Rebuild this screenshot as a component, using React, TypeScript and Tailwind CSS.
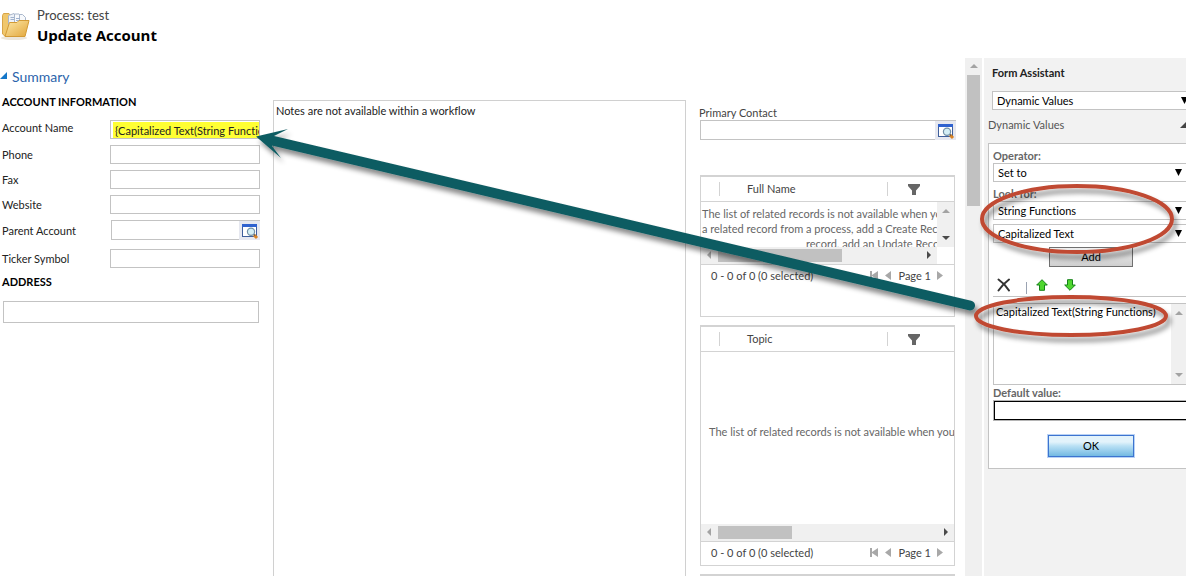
import type { ReactNode } from "react";

function FolderIcon() {
  return (
    <svg width="30" height="30" viewBox="0 0 30 30" aria-hidden="true">
      <defs>
        <linearGradient id="folder" x1="0" y1="0" x2="1" y2="1">
          <stop offset="0" stopColor="#fde9a9" />
          <stop offset="1" stopColor="#e2a63a" />
        </linearGradient>
      </defs>
      <ellipse cx="14" cy="27" rx="13" ry="2" fill="#ece6da" />
      <path d="M2.5 4.5 L3.5 2.5 H9 L10.5 4.5 V24 L5 25 L2.5 23 Z" fill="#f0c76c" stroke="#d8a548" />
      <path d="M8.500 4.500 L14 2.500 L16 5 V16 H8.500 Z" fill="#eef2f8" stroke="#a9b7cc" />
      <path d="M14.500 3 H19 L22 6 V16 H14.500 Z" fill="#f7f9fc" stroke="#a9b7cc" />
      <path d="M19.500 3.500 H22.500 L25.500 6.500 V14 H19.500 Z" fill="#f7f9fc" stroke="#a9b7cc" />
      <path d="M10.500 6.500 H14 M10.500 8.500 H14 M16 7.500 H20 M16 9.500 H20" stroke="#9fb2cf" />
      <path d="M5 25.500 L9.500 11.500 H17 L19 9.500 H29 L25 25.500 Z" fill="url(#folder)" stroke="#d39b35" strokeLinejoin="round" />
    </svg>
  );
}

function LookupIcon() {
  return (
    <svg width="18" height="18" viewBox="0 0 18 18" className="shrink-0" aria-hidden="true">
      <rect x="1.500" y="2.500" width="14" height="12" fill="#fff" stroke="#3f5f9c" />
      <rect x="1" y="2" width="15" height="3" fill="#2f62cf" />
      <path d="M13 13 L16 16" stroke="#d98324" strokeWidth="3" />
      <path d="M12.500 12 L14 13.500" stroke="#6b5a48" strokeWidth="1.500" />
      <circle cx="10" cy="9.800" r="3.600" fill="#d3eef5" stroke="#7390a6" strokeWidth="1.200" />
    </svg>
  );
}

type Dir = "up" | "down" | "left" | "right";
const triangles: Record<Dir, string> = {
  up: "M0 6 L4 2 L8 6 Z",
  down: "M0 2 L4 6 L8 2 Z",
  left: "M6 0 L2 4 L6 8 Z",
  right: "M2 0 L6 4 L2 8 Z",
};

function Triangle({ dir, color = "#a3a3a3" }: { dir: Dir; color?: string }) {
  return (
    <svg width="8" height="8" viewBox="0 0 8 8" className="shrink-0" aria-hidden="true">
      <path d={triangles[dir]} fill={color} />
    </svg>
  );
}

function Field({ id, label }: { id: string; label: string }) {
  return (
    <div className="mb-1.5 flex h-[19px] items-center">
      <label htmlFor={id} className="w-[108px] shrink-0">{label}</label>
      <input id={id} className="h-full min-w-0 flex-1 border border-[#c3c3c3] bg-white px-1 outline-none" />
    </div>
  );
}

function Lookup({ id, label }: { id: string; label: string }) {
  return (
    <div className="flex h-5 min-w-0 flex-1">
      <input id={id} className="min-w-0 flex-1 border border-r-0 border-[#c3c3c3] bg-white px-1 outline-none" />
      <button type="button" aria-label={label} className="flex w-[21px] items-center justify-center border-t border-[#c3c3c3] bg-[#e6e8f0]">
        <LookupIcon />
      </button>
    </div>
  );
}

function HorizontalScroll({ thumb, track }: { thumb: string; track: string }) {
  return (
    <div className={`flex h-[17px] items-center bg-[#f0f0f0] px-1 ${track}`}>
      <Triangle dir="left" />
      <div className={`ml-[5px] h-[13px] bg-[#c1c1c1] ${thumb}`} />
      <span className="flex-1" />
      <Triangle dir="right" color="#4a4a4a" />
    </div>
  );
}

function Grid({ title, height, children }: { title: string; height: string; children: ReactNode }) {
  return (
    <section className={`flex flex-col border border-t-2 border-[#d3d3d3] text-[#444] ${height}`}>
      <table className="w-full table-fixed border-collapse">
        <thead>
          <tr className="h-6 border-b border-[#d3d3d3]">
            <th className="w-[19px]" aria-label="Select"><div className="h-3.5 border-r border-[#d3d3d3]" /></th>
            <th className="pl-[27px] text-left font-normal">{title}</th>
            <th className="w-[67px]">
              <div className="flex h-3.5 items-center border-l border-[#d3d3d3] pl-5">
                <button type="button" aria-label={`Filter ${title}`} className="pt-0.5">
                  <svg width="12" height="12" viewBox="0 0 12 12" aria-hidden="true">
                    <path d="M0 0 H12 V2 L8 6.500 V11 H4 V6.500 L0 2 Z" fill="#666" />
                  </svg>
                </button>
              </div>
            </th>
          </tr>
        </thead>
        <tbody>
          <tr>
            <td colSpan={3} className="p-0">{children}</td>
          </tr>
        </tbody>
      </table>
      <footer className="flex h-[22px] items-center border-t border-[#d3d3d3] pl-2.5 pr-2.5 whitespace-nowrap">
        <span className="flex-1">0 - 0 of 0 (0 selected)</span>
        <button type="button" aria-label="First page" className="mr-1.5">
          <svg width="9" height="9" viewBox="0 0 9 9" aria-hidden="true">
            <path d="M0 0 H2 V4 L8 0 V9 L2 5 V9 H0 Z" fill="#a8a8a8" />
          </svg>
        </button>
        <button type="button" aria-label="Previous page" className="mr-1.5">
          <svg width="7" height="9" viewBox="0 0 7 9" aria-hidden="true"><path d="M6 0 V9 L0 4.500 Z" fill="#a8a8a8" /></svg>
        </button>
        <span>Page 1</span>
        <button type="button" aria-label="Next page" className="ml-1.5">
          <svg width="7" height="9" viewBox="0 0 7 9" aria-hidden="true"><path d="M0 0 V9 L6 4.500 Z" fill="#a8a8a8" /></svg>
        </button>
      </footer>
    </section>
  );
}

function Select({ label, value, arrow }: { label: string; value: string; arrow: string }) {
  return (
    <div className="relative h-[19px] overflow-hidden border border-r-0 border-[#c3c3c3] bg-white">
      <select aria-label={label} className="block h-full w-full appearance-none bg-transparent px-1 text-black outline-none">
        <option>{value}</option>
      </select>
      <svg width="7" height="7" viewBox="0 0 7 7" className={`pointer-events-none absolute top-[5px] ${arrow}`} aria-hidden="true">
        <path d="M0 0 H7 L3.500 7 Z" fill="#000" />
      </svg>
    </div>
  );
}

function MoveArrow({ down = false }: { down?: boolean }) {
  return (
    <svg width="12" height="12" viewBox="0 0 12 12" className={down ? "rotate-180" : ""} aria-hidden="true">
      <path d="M6 0.700 L11.300 6 H8.500 V11.300 H3.500 V6 H0.700 Z" fill="#4fd62f" stroke="#16821a" />
    </svg>
  );
}

function Annotations() {
  return (
    <svg width="1186" height="576" viewBox="0 0 1186 576" className="pointer-events-none absolute left-0 top-0" aria-hidden="true">
      <defs>
        <filter id="shade" x="-10%" y="-20%" width="120%" height="150%">
          <feDropShadow dx="3" dy="5" stdDeviation="2.500" floodColor="#000" floodOpacity="0.45" />
        </filter>
      </defs>
      <g filter="url(#shade)">
        <path d="M274 141 L970 305.500" stroke="#115c62" strokeWidth="10" strokeLinecap="round" />
        <path d="M256 136.500 L288 129 L274 136 L272 146 L281 158 Z" fill="#115c62" />
      </g>
      <g filter="url(#shade)" fill="none" stroke="#c04a33" strokeWidth="4">
        <ellipse cx="1077" cy="219" rx="95" ry="33" />
        <ellipse cx="1071" cy="316" rx="95" ry="19" />
      </g>
    </svg>
  );
}

export default function App() {
  return (
    <div className="relative flex h-screen flex-col overflow-hidden bg-white font-['Lato','Liberation_Sans',sans-serif] text-[11px] leading-[15px] text-[#222] [font-variant-ligatures:none]">
      <header className="flex h-[58px] shrink-0 items-start pt-[7px]">
        <div className="w-[37px] shrink-0 pt-1"><FolderIcon /></div>
        <div>
          <p className="text-[13px] leading-4 text-[#444]">Process: test</p>
          <h1 className="font-['Open_Sans','Liberation_Sans',sans-serif] text-[15px] leading-6 font-bold text-black">Update Account</h1>
        </div>
      </header>

      <div className="flex min-h-0 flex-1">
        <main className="flex min-w-0 flex-1 flex-col pr-[9px]">
          <h2 className="flex h-9 shrink-0 items-center gap-[5px] pt-0.5 text-sm text-[#2b64ab]">
            <svg width="7" height="7" viewBox="0 0 7 7" className="mb-1" aria-hidden="true"><path d="M7 0 V7 H0 Z" fill="#1477c9" /></svg>
            Summary
          </h2>
          <div className="flex min-h-0 flex-1 items-stretch">
            <form className="w-[260px] shrink-0 pl-0.5">
              <h3 className="mb-[11px] font-bold text-black">ACCOUNT INFORMATION</h3>
              <div className="mb-1.5 flex h-[19px] items-start">
                <label htmlFor="name" className="w-[108px] shrink-0">Account Name</label>
                <div className="h-full min-w-0 flex-1 border border-[#c3c3c3] pl-0.5 pt-px">
                  <input id="name" defaultValue="{Capitalized Text(String Functions)}" className="block h-4 w-full bg-[#ffff33] pl-0.5 outline-none" />
                </div>
              </div>
              <Field id="phone" label="Phone" />
              <Field id="fax" label="Fax" />
              <Field id="website" label="Website" />
              <div className="mb-[9px] flex items-center">
                <label htmlFor="parent" className="w-[109px] shrink-0">Parent Account</label>
                <Lookup id="parent" label="Look up parent account" />
              </div>
              <Field id="ticker" label="Ticker Symbol" />
              <h3 className="mb-3 font-bold text-black">ADDRESS</h3>
              <input aria-label="Address" className="ml-px block h-[22px] w-64 border border-[#c3c3c3] px-1 outline-none" />
            </form>

            <section className="ml-[13px] mt-1.5 min-w-0 flex-1 border border-b-0 border-[#d0d0d0] px-0.5 pt-0.5">
              Notes are not available within a workflow
            </section>

            <aside className="ml-3.5 flex w-64 shrink-0 flex-col pt-[11px]">
              <label htmlFor="contact" className="-ml-px text-[#444]">Primary Contact</label>
              <div className="mb-[35px] flex shrink-0">
                <Lookup id="contact" label="Look up primary contact" />
              </div>
              <div className="mr-px flex flex-col gap-2">
                <Grid title="Full Name" height="h-[142px]">
                  <div className="flex h-[45px] overflow-hidden">
                    <div className="min-w-0 flex-1 overflow-hidden pl-px pt-1 whitespace-nowrap text-[#666]">
                      <p>The list of related records is not available when you create</p>
                      <p>a related record from a process, add a Create Record step</p>
                      <p className="pl-[104px]">record, add an Update Record step</p>
                    </div>
                    <div className="flex w-[17px] flex-col items-center justify-between bg-[#f0f0f0] py-[5px]">
                      <Triangle dir="up" />
                      <Triangle dir="down" color="#4a4a4a" />
                    </div>
                  </div>
                  <HorizontalScroll thumb="w-[124px]" track="mr-[17px]" />
                </Grid>
                <Grid title="Topic" height="h-[241px]">
                  <div className="flex h-[172px] items-center overflow-hidden pb-3 pl-2 whitespace-nowrap text-[#666]">
                    The list of related records is not available when you create
                  </div>
                  <HorizontalScroll thumb="w-[74px]" track="" />
                </Grid>
                <div className="h-6 border border-t-2 border-[#d3d3d3]" />
              </div>
            </aside>
          </div>
        </main>

        <div className="flex w-[17px] shrink-0 flex-col items-center bg-[#f0f0f0] pt-1">
          <Triangle dir="up" />
          <div className="mt-[5px] h-[131px] w-[13px] bg-[#c1c1c1]" />
        </div>

        <aside className="ml-0.5 w-[202px] shrink-0 bg-[#f2f2f2] pl-1 pt-[7px]">
          <h2 className="mb-[11px] pl-1 font-bold">Form Assistant</h2>
          <div className="pl-1">
            <Select label="Assistant type" value="Dynamic Values" arrow="-right-0.5" />
          </div>
          <div className="flex h-[33px] items-center justify-between pb-1 text-[#555]">
            <span>Dynamic Values</span>
            <svg width="6" height="6" viewBox="0 0 6 6" aria-hidden="true"><path d="M6 0 V6 H0 Z" fill="#444" /></svg>
          </div>
          <section className="border border-r-0 border-[#c3c3c3] bg-white pb-[11px] pl-1 pt-1">
            <h3 className="font-bold text-[#666]">Operator:</h3>
            <Select label="Operator" value="Set to" arrow="right-1" />
            <h3 className="mt-1 font-bold text-[#666]">Look for:</h3>
            <div className="flex flex-col gap-1">
              <Select label="Look for" value="String Functions" arrow="right-1" />
              <Select label="Function" value="Capitalized Text" arrow="right-1" />
            </div>
            <button type="button" className="ml-14 mt-1 block h-5 w-[84px] border border-[#707070] bg-linear-to-b from-[#f0f0f0] to-[#cfcfcf] pb-0.5 text-black">Add</button>
            <div className="mb-1.5 flex h-[30px] items-center border-b border-[#c3c3c3] pl-1 pt-[7px]">
              <button type="button" aria-label="Remove">
                <svg width="14" height="14" viewBox="0 0 14 14" aria-hidden="true">
                  <path d="M1.500 1.500 Q8 6 12 12.500 M12 1.500 Q6 6 1.500 12.500" fill="none" stroke="#333" strokeWidth="2" strokeLinecap="round" />
                </svg>
              </button>
              <span className="ml-[15px] mr-[9px] mt-1.5 h-3 border-l border-[#9aa3b2]" />
              <button type="button" aria-label="Move up" className="mr-4"><MoveArrow /></button>
              <button type="button" aria-label="Move down"><MoveArrow down /></button>
            </div>
            <div className="flex h-[82px] border border-r-0 border-[#c3c3c3]">
              <ul className="min-w-0 flex-1 pl-0.5 whitespace-nowrap text-black">
                <li>Capitalized Text(String Functions)</li>
              </ul>
              <div className="flex w-[15px] flex-col items-center justify-between bg-[#f0f0f0] py-[5px]">
                <Triangle dir="up" />
                <Triangle dir="down" />
              </div>
            </div>
            <label htmlFor="default" className="block font-bold text-[#666]">Default value:</label>
            <div className="border border-r-0 border-[#b5b5b5]">
              <input id="default" className="block h-[19px] w-full border border-r-0 border-black px-1 outline-none" />
            </div>
            <button type="button" className="ml-[55px] mt-3.5 block h-[22px] w-[86px] border border-[#3c74d0] bg-linear-to-b from-[#e3f3fb] from-30% via-[#b9e0f4] via-50% to-[#72b9e2] pb-0.5 text-black outline-1 outline-[#b9d2f5]">OK</button>
          </section>
        </aside>
      </div>
      <Annotations />
    </div>
  );
}
